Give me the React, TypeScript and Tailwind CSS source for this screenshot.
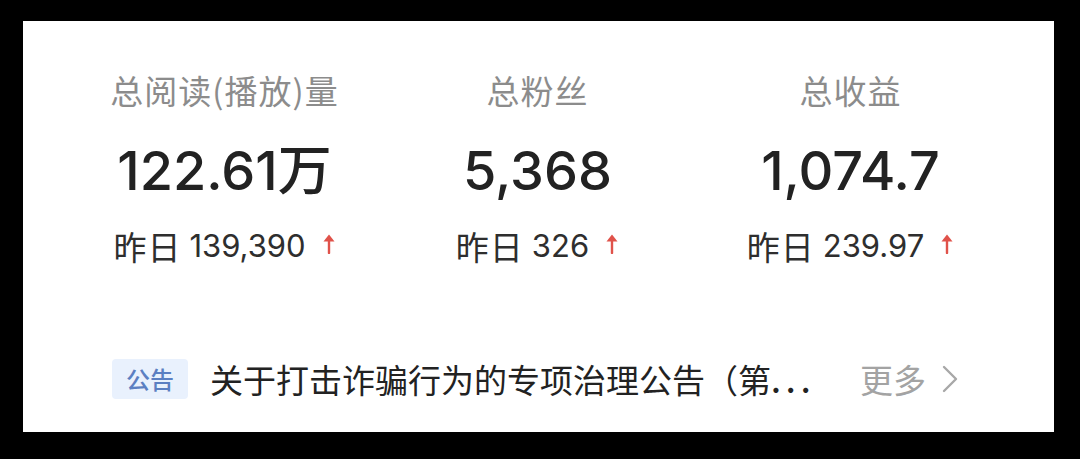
import React from 'react';

interface StatProps {
  label: string;
  value: string;
  yesterday: string;
}

const UpArrow: React.FC = () => (
  <svg width="14" height="22" viewBox="0 0 14 22" className="ml-[16px] mt-[-6px]">
    <path d="M7 21V5" stroke="#e0524a" strokeWidth="2.4" strokeLinecap="round" />
    <path d="M1.5 9.5L7 2.5L12.5 9.5Z" fill="#e0524a" />
  </svg>
);

const StatColumn: React.FC<StatProps> = ({ label, value, yesterday }) => (
  <div className="flex flex-col items-center">
    <div className="text-[33px] leading-[40px] text-[#8c8c8c] tracking-[1px]">{label}</div>
    <div
      className="mt-[29px] text-[54px] leading-[64px] font-medium text-[#222222]"
      style={{ fontFamily: 'Inter, "Noto Sans CJK SC", sans-serif' }}
    >
      {value}
    </div>
    <div className="mt-[23px] flex items-center text-[31px] leading-[40px] text-[#2e2e2e]">
      <span className="text-[33px] tracking-[1px]">昨日</span>
      <span className="ml-[8px]" style={{ fontFamily: 'Inter, "Noto Sans CJK SC", sans-serif' }}>
        {yesterday}
      </span>
      <UpArrow />
    </div>
  </div>
);

export default function App() {
  return (
    <div
      className="w-[1080px] h-[459px] bg-black pt-[21px] pl-[23px]"
      style={{ fontFamily: '"Noto Sans CJK SC", "Noto Sans", sans-serif' }}
    >
      <div className="w-[1031px] h-[411px] bg-white pt-[49px]">
        <div className="ml-[45px] w-[939px] grid grid-cols-3">
          <StatColumn label="总阅读(播放)量" value="122.61万" yesterday="139,390" />
          <StatColumn label="总粉丝" value="5,368" yesterday="326" />
          <StatColumn label="总收益" value="1,074.7" yesterday="239.97" />
        </div>

        <div className="mt-[93px] ml-[89px] flex items-center h-[40px]">
          <div className="w-[76px] h-[40px] rounded-[4px] bg-[#e9f1fd] flex items-center justify-center text-[24px] font-medium text-[#5b7fc2]">
            公告
          </div>
          <div className="ml-[22px] w-[620px] text-[33px] leading-[40px] text-[#222222] whitespace-nowrap">
            关于打击诈骗行为的专项治理公告（第<span className="tracking-[5px] font-medium">...</span>
          </div>
          <div className="ml-[30px] flex items-center text-[33px] leading-[40px] text-[#a3a3a3]">
            <span>更多</span>
            <svg width="20" height="30" viewBox="0 0 20 30" className="ml-[14px]">
              <path d="M4 3L16 15L4 27" stroke="#a8a8a8" strokeWidth="2.4" fill="none" strokeLinecap="round" strokeLinejoin="round" />
            </svg>
          </div>
        </div>
      </div>
    </div>
  );
}
